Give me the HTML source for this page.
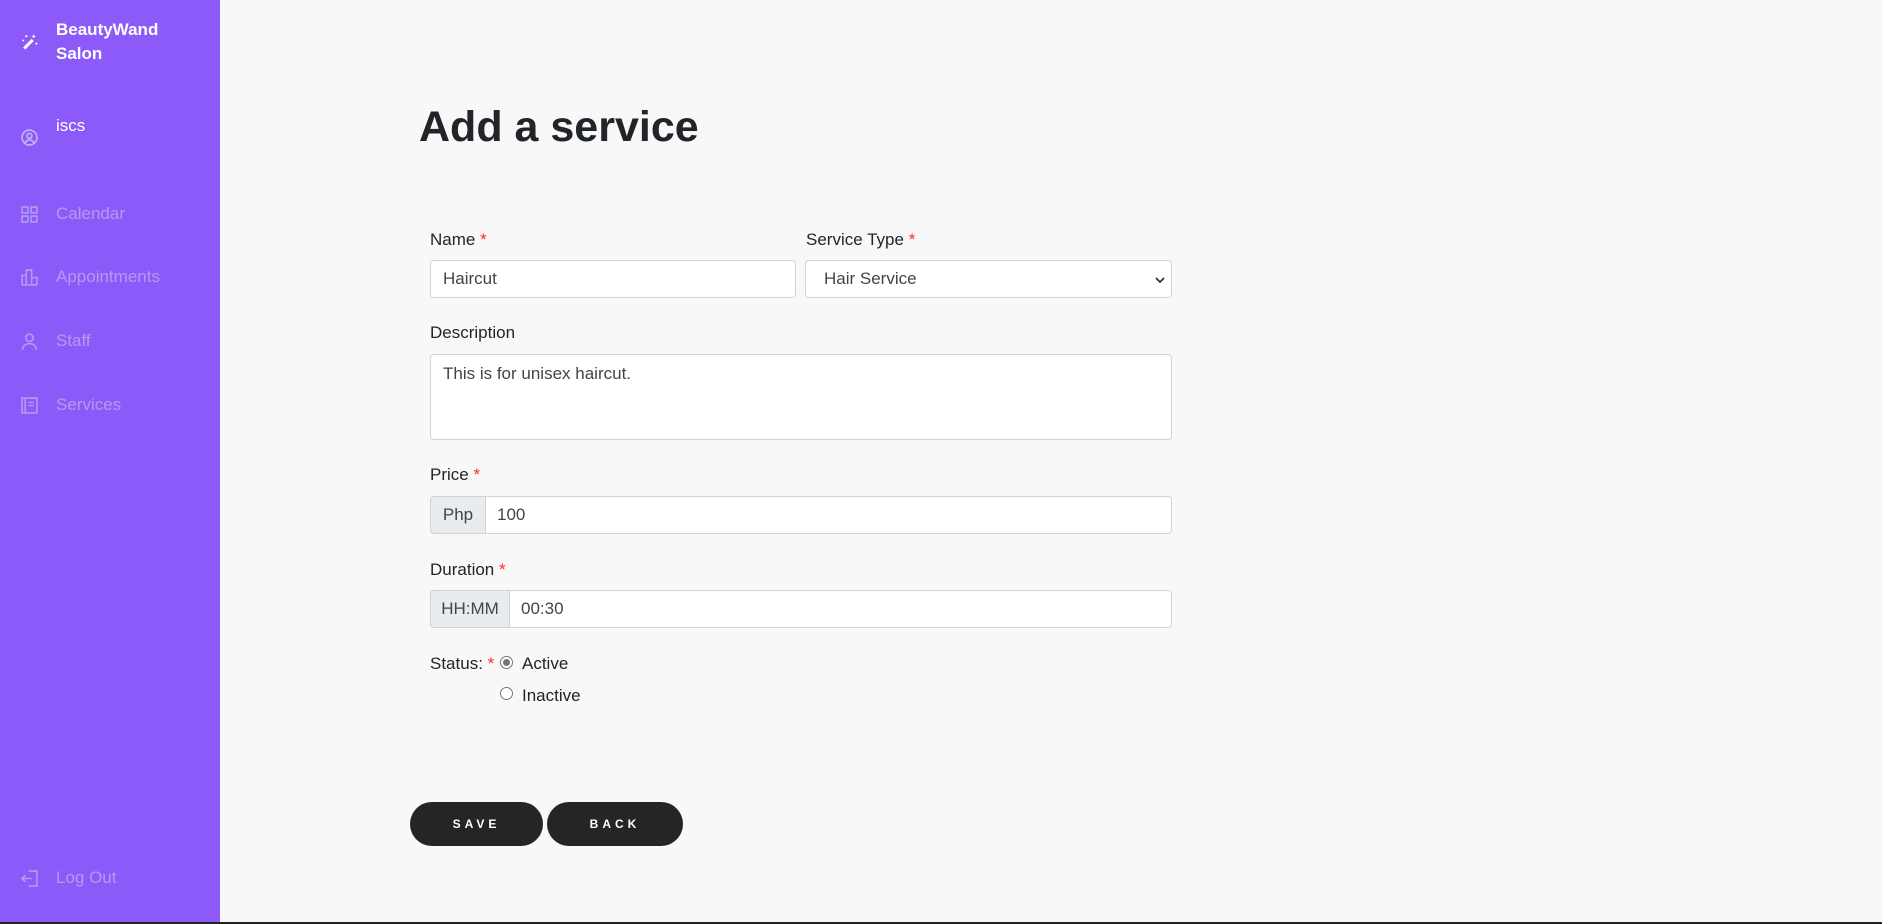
<!DOCTYPE html>
<html><head><meta charset="utf-8"><style>
*{box-sizing:border-box;margin:0;padding:0}
body{width:1882px;height:924px;background:#f8f8f8;font-family:"Liberation Sans",sans-serif;position:relative;overflow:hidden;color:#212529}
.sb{position:absolute;left:0;top:0;width:220px;height:924px;background:#8b5af8}
.brand{position:absolute;left:56px;top:18px;color:#fff;font-weight:bold;font-size:17px;line-height:24px}
.nav{position:absolute;left:56px;font-size:17px;color:#b59bf0;line-height:20px}
.ic{position:absolute;left:21px;width:17px;height:17px}
.ttl{position:absolute;left:419px;top:103px;font-size:43px;font-weight:bold;color:#212529}
.lbl{position:absolute;font-size:17px;color:#212529}
.lbl b{color:#ff2b2b;font-weight:normal}
.inp{position:absolute;background:#fff;border:1px solid #ced4da;border-radius:4px;font-size:17px;color:#444;padding-left:12px;display:flex;align-items:center}
.add{position:absolute;background:#e9ecef;border:1px solid #ced4da;border-radius:4px 0 0 4px;font-size:17px;color:#444;display:flex;align-items:center;justify-content:center}
.btn{position:absolute;top:802px;height:44px;background:#252525;border-radius:22px;color:#fff;font-size:12px;font-weight:bold;letter-spacing:4px;display:flex;align-items:center;justify-content:center}
.rad{position:absolute;left:500px;width:13px;height:13px;border:1px solid #777;border-radius:50%;background:#fff}
</style></head><body>
<div class="sb">
<svg class="ic" style="top:33px" viewBox="0 0 16 16" fill="#fff"><path d="M2 13.5 L10 5.5 L12 7.5 L4 15.5 Z"/><path d="M12 1 l.6 1.6 1.6.6-1.6.6L12 5.4l-.6-1.6L9.8 3.2l1.6-.6z"/><circle cx="5" cy="3" r="1"/><circle cx="14.5" cy="10" r="1"/><circle cx="2" cy="7" r=".9"/></svg>
<div class="brand">BeautyWand<br>Salon</div>
<svg class="ic" style="top:129px" viewBox="0 0 16 16" fill="none" stroke="#c7b4f5" stroke-width="1.5"><circle cx="8" cy="8" r="7"/><circle cx="8" cy="6.5" r="2.3"/><path d="M3.8 13c1-2 2.5-2.7 4.2-2.7s3.2.7 4.2 2.7"/></svg>
<div class="nav" style="top:116px;color:#fff">iscs</div>
<svg class="ic" style="top:206px" viewBox="0 0 16 16" fill="none" stroke="#b59bf0" stroke-width="1.5"><rect x="1" y="1" width="5.5" height="5.5"/><rect x="9.5" y="1" width="5.5" height="5.5"/><rect x="1" y="9.5" width="5.5" height="5.5"/><rect x="9.5" y="9.5" width="5.5" height="5.5"/></svg>
<div class="nav" style="top:204px">Calendar</div>
<svg class="ic" style="top:269px" viewBox="0 0 16 16" fill="none" stroke="#b59bf0" stroke-width="1.5"><path d="M1 15V6h4v9M5 15V1h5v14M10 15V8h5v7M1 15h14"/></svg>
<div class="nav" style="top:267px">Appointments</div>
<svg class="ic" style="top:333px" viewBox="0 0 16 16" fill="none" stroke="#b59bf0" stroke-width="1.5"><circle cx="8" cy="4.5" r="3.5"/><path d="M1.5 16c0-4 3-6 6.5-6s6.5 2 6.5 6"/></svg>
<div class="nav" style="top:331px">Staff</div>
<svg class="ic" style="top:397px" viewBox="0 0 16 16" fill="none" stroke="#b59bf0" stroke-width="1.5"><rect x="1" y="1" width="14" height="14"/><path d="M4 1v14M7 5h5M7 8h5"/></svg>
<div class="nav" style="top:395px">Services</div>
<svg class="ic" style="top:870px" viewBox="0 0 16 16" fill="none" stroke="#b59bf0" stroke-width="1.5"><path d="M7 1h8v14H7M1 8h9M4 5L1 8l3 3"/></svg>
<div class="nav" style="top:868px">Log Out</div>
</div>
<div class="ttl">Add a service</div>
<div class="lbl" style="left:430px;top:230px">Name <b>*</b></div>
<div class="lbl" style="left:806px;top:230px">Service Type <b>*</b></div>
<div class="inp" style="left:430px;top:260px;width:366px;height:38px">Haircut</div>
<div class="inp" style="left:805px;top:260px;width:367px;height:38px;padding-left:18px">Hair Service<svg style="position:absolute;right:6px;top:15px" width="10" height="8" viewBox="0 0 10 8"><path d="M1 2l4 4 4-4" stroke="#333" stroke-width="1.8" fill="none"/></svg></div>
<div class="lbl" style="left:430px;top:323px">Description</div>
<div class="inp" style="left:430px;top:354px;width:742px;height:86px;align-items:flex-start;padding-top:9px">This is for unisex haircut.</div>
<div class="lbl" style="left:430px;top:465px">Price <b>*</b></div>
<div class="inp" style="left:430px;top:496px;width:742px;height:38px;padding-left:66px">100</div>
<div class="add" style="left:430px;top:496px;width:56px;height:38px">Php</div>
<div class="lbl" style="left:430px;top:560px">Duration <b>*</b></div>
<div class="inp" style="left:430px;top:590px;width:742px;height:38px;padding-left:90px">00:30</div>
<div class="add" style="left:430px;top:590px;width:80px;height:38px">HH:MM</div>
<div class="lbl" style="left:430px;top:654px">Status: <b>*</b></div>
<div class="rad" style="top:656px"><div style="margin:2px;width:7px;height:7px;border-radius:50%;background:#777"></div></div>
<div class="lbl" style="left:522px;top:654px">Active</div>
<div class="rad" style="top:687px"></div>
<div class="lbl" style="left:522px;top:686px">Inactive</div>
<div class="btn" style="left:410px;width:133px">SAVE</div>
<div class="btn" style="left:547px;width:136px">BACK</div>
<div style="position:absolute;left:0;top:922px;width:1882px;height:2px;background:#222"></div>
</body></html>
